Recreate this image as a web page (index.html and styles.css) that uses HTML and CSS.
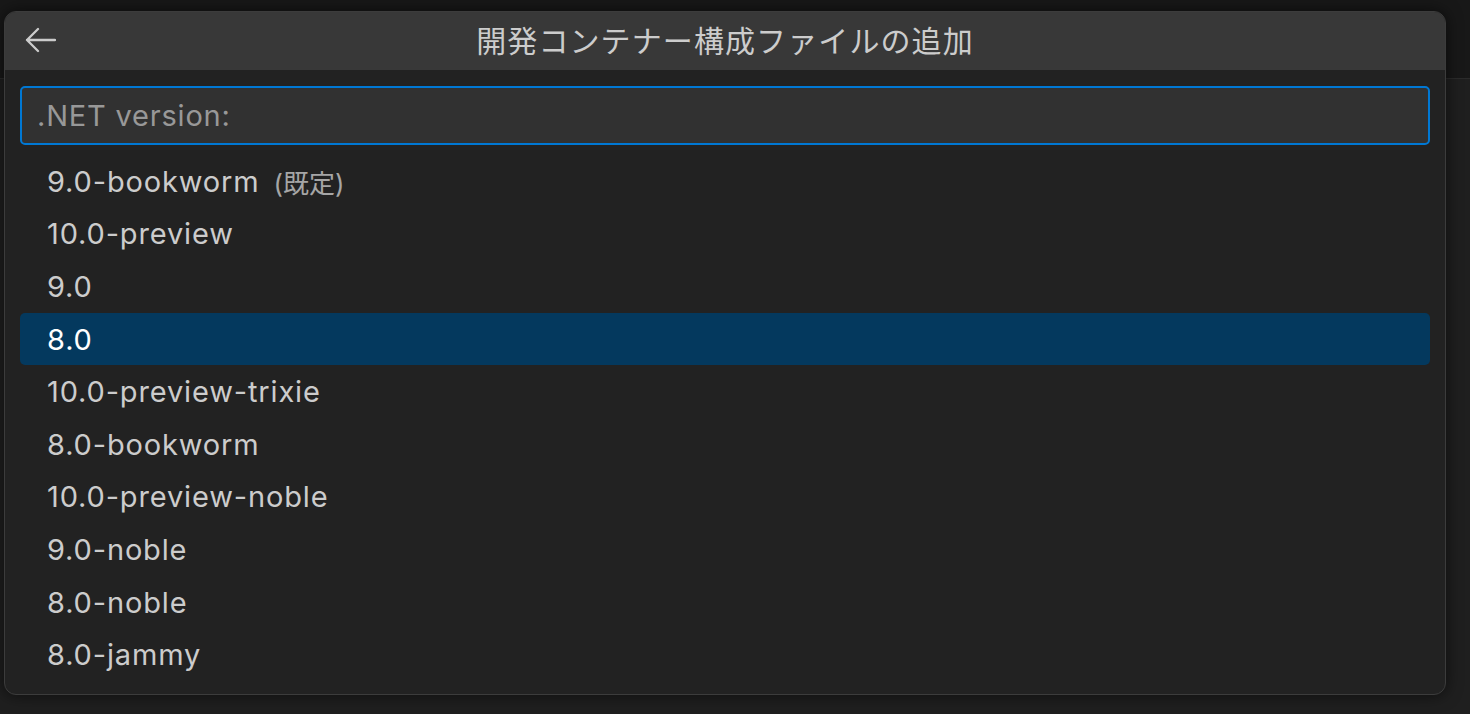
FILE: index.html
```html
<!DOCTYPE html>
<html lang="ja">
<head>
<meta charset="utf-8">
<title>開発コンテナー構成ファイルの追加</title>
<link rel="stylesheet" href="styles.css">
</head>
<body>
<div class="workbench">
  <div class="topband"></div>
  <div class="editor"></div>
</div>
<div class="quick-pick">
  <div class="qp-title">
    <button class="back" aria-label="戻る">
      <svg width="32" height="28" viewBox="0 0 32 28"><path d="M31 13H3M14 2L3 13L14 24" fill="none" stroke="#cccccc" stroke-width="2.3" stroke-linecap="round" stroke-linejoin="round"/></svg>
    </button>
    <div class="qp-title-text">開発コンテナー構成ファイルの追加</div>
  </div>
  <div class="qp-body">
    <div class="qp-input"><span class="placeholder">.NET version:</span></div>
    <ul class="qp-list">
      <li class="row"><span class="label">9.0-bookworm</span><span class="desc">(既定)</span></li>
      <li class="row"><span class="label">10.0-preview</span></li>
      <li class="row"><span class="label">9.0</span></li>
      <li class="row selected"><span class="label">8.0</span></li>
      <li class="row"><span class="label">10.0-preview-trixie</span></li>
      <li class="row"><span class="label">8.0-bookworm</span></li>
      <li class="row"><span class="label">10.0-preview-noble</span></li>
      <li class="row"><span class="label">9.0-noble</span></li>
      <li class="row"><span class="label">8.0-noble</span></li>
      <li class="row"><span class="label">8.0-jammy</span></li>
    </ul>
  </div>
</div>
</body>
</html>
```
FILE: styles.css
```css
html, body {
  margin: 0;
  padding: 0;
  width: 1470px;
  height: 714px;
  overflow: hidden;
  background: #1f1f1f;
  font-family: "Inter", "Noto Sans CJK JP", sans-serif;
}

.workbench {
  display: flex;
  flex-direction: column;
  height: 714px;
}

.topband {
  height: 78px;
  background: #181818;
  border-bottom: 1px solid #2b2b2b;
}

.editor {
  flex: 1;
  background: #1f1f1f;
}

.quick-pick {
  position: absolute;
  left: 4px;
  top: 11px;
  width: 1442px;
  height: 684px;
  box-sizing: border-box;
  border: 1px solid #3c3c3c;
  border-radius: 12px;
  background: #222222;
  overflow: hidden;
  box-shadow: 0 0 16px rgba(0, 0, 0, 0.6);
  display: flex;
  flex-direction: column;
}

.qp-title {
  position: relative;
  height: 58px;
  background: #383838;
  display: flex;
  align-items: center;
  justify-content: center;
  flex-shrink: 0;
}

.back {
  position: absolute;
  left: 18px;
  top: 15px;
  width: 34px;
  height: 28px;
  padding: 0;
  border: 0;
  background: transparent;
  display: flex;
  align-items: center;
  justify-content: center;
}

.qp-title-text {
  color: #cccccc;
  font-size: 30px;
  font-family: "Noto Sans CJK JP", sans-serif;
  letter-spacing: 1.1px;
  line-height: 1;
  padding-bottom: 5px;
}

.qp-body {
  padding: 16px 15px 0 15px;
  display: flex;
  flex-direction: column;
}

.qp-input {
  height: 59px;
  box-sizing: border-box;
  border: 2px solid #0078d4;
  border-radius: 5px;
  background: #313131;
  display: flex;
  align-items: center;
  padding-left: 15px;
}

.placeholder {
  color: #989898;
  font-size: 29px;
  letter-spacing: 0.8px;
}

.qp-list {
  list-style: none;
  margin: 10px 0 0 0;
  padding: 0;
}

.row {
  height: 52.6px;
  display: flex;
  align-items: center;
  padding-left: 27px;
  border-radius: 5px;
  color: #cccccc;
  font-size: 29px;
  letter-spacing: 0.85px;
}

.row.selected {
  background: #04395e;
  color: #ffffff;
}

.desc {
  margin-left: 14px;
  font-size: 26px;
  letter-spacing: 0;
  color: #a6a6a6;
}
```
